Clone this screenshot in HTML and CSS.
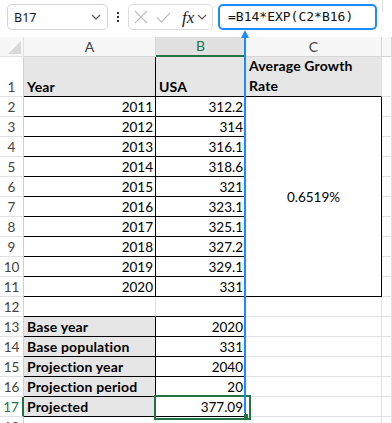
FILE: index.html
```html
<!DOCTYPE html>
<html lang="en">
<head>
    <meta charset="UTF-8">
    <meta name="viewport" content="width=device-width, initial-scale=1.0">
    <title>Population Projection - Book1</title>
    <link rel="stylesheet" href="styles.css">
</head>
<body>
    <div class="app">
        <div class="toolbar">
            <div class="namebox">
                <span>B17</span>
                <svg class="chev" width="10" height="6" viewBox="0 0 10 6"><path d="M1 1l4 4 4-4"/></svg>
            </div>
            <div class="more"><i></i><i></i><i></i></div>
            <div class="fnbox">
                <svg class="cancel" width="14" height="14" viewBox="0 0 14 14"><path d="M1 1l12 12M13 1L1 13"/></svg>
                <svg class="enter" width="15" height="11" viewBox="0 0 15 11"><path d="M1 5.5l4.5 4.5L14 1"/></svg>
                <span class="fx">fx</span>
                <svg class="chev" width="10" height="6" viewBox="0 0 10 6"><path d="M1 1l4 4 4-4"/></svg>
            </div>
            <div class="formula">=B14*EXP(C2*B16)</div>
            <div class="tail"></div>
        </div>

        <div class="sheet">
            <div class="corner"><span></span></div>
            <div class="col">A</div>
            <div class="col active">B</div>
            <div class="col">C</div>
            <div class="col"></div>

            <div class="rh">1</div>
            <div class="c fill b bk">Year</div>
            <div class="c fill b bk">USA</div>
            <div class="c fill b bb wrap">Average Growth Rate</div>
            <div class="c"></div>

            <div class="rh">2</div>
            <div class="c num bk">2011</div>
            <div class="c num bk">312.2</div>
            <div class="c merged bk">0.6519%</div>
            <div class="c"></div>

            <div class="rh">3</div>
            <div class="c num bk">2012</div>
            <div class="c num bk">314</div>
            <div class="c"></div>

            <div class="rh">4</div>
            <div class="c num bk">2013</div>
            <div class="c num bk">316.1</div>
            <div class="c"></div>

            <div class="rh">5</div>
            <div class="c num bk">2014</div>
            <div class="c num bk">318.6</div>
            <div class="c"></div>

            <div class="rh">6</div>
            <div class="c num bk">2015</div>
            <div class="c num bk">321</div>
            <div class="c"></div>

            <div class="rh">7</div>
            <div class="c num bk">2016</div>
            <div class="c num bk">323.1</div>
            <div class="c"></div>

            <div class="rh">8</div>
            <div class="c num bk">2017</div>
            <div class="c num bk">325.1</div>
            <div class="c"></div>

            <div class="rh">9</div>
            <div class="c num bk">2018</div>
            <div class="c num bk">327.2</div>
            <div class="c"></div>

            <div class="rh">10</div>
            <div class="c num bk">2019</div>
            <div class="c num bk">329.1</div>
            <div class="c"></div>

            <div class="rh">11</div>
            <div class="c num bk">2020</div>
            <div class="c num bk">331</div>
            <div class="c"></div>

            <div class="rh">12</div>
            <div class="c bb"></div>
            <div class="c bb"></div>
            <div class="c"></div>
            <div class="c"></div>

            <div class="rh">13</div>
            <div class="c fill b bk">Base year</div>
            <div class="c num bk">2020</div>
            <div class="c"></div>
            <div class="c"></div>

            <div class="rh">14</div>
            <div class="c fill b bk">Base population</div>
            <div class="c num bk">331</div>
            <div class="c"></div>
            <div class="c"></div>

            <div class="rh">15</div>
            <div class="c fill b bk">Projection year</div>
            <div class="c num bk">2040</div>
            <div class="c"></div>
            <div class="c"></div>

            <div class="rh">16</div>
            <div class="c fill b bk">Projection period</div>
            <div class="c num bk">20</div>
            <div class="c"></div>
            <div class="c"></div>

            <div class="rh sel">17</div>
            <div class="c fill b bk">Projected</div>
            <div class="c num bk current">377.09<span class="handle"></span></div>
            <div class="c"></div>
            <div class="c"></div>

            <div class="rh">18</div>
            <div class="c"></div>
            <div class="c"></div>
            <div class="c"></div>
            <div class="c"></div>
        </div>

        <!-- precedent arrow from B17 up to the formula bar -->
        <svg class="trace" width="10" height="386" viewBox="0 0 10 386">
            <path d="M5 8V384"/>
            <polygon points="5,1 1,9 9,9"/>
        </svg>
    </div>
</body>
</html>
```

FILE: styles.css
```css
* { box-sizing: border-box; }
body { margin: 0; background: #fff; font-family: Lato, "Noto Sans", sans-serif; }
.app { position: relative; width: 392px; height: 423px; overflow: hidden; }

.toolbar { height: 37px; display: flex; align-items: flex-start; padding: 4px 0 0 7px; }
.namebox { width: 101px; height: 26px; border: 1px solid #d4d4d4; border-radius: 5px; display: flex; align-items: center; justify-content: space-between; padding: 0 6px 0 6px; font-family: "Noto Sans", sans-serif; font-size: 12.5px; color: #1b1b1b; }
.chev path { fill: none; stroke: #555; stroke-width: 1.1; }
.more { width: 20px; height: 26px; display: flex; flex-direction: column; align-items: center; justify-content: center; gap: 2px; }
.more i { display: block; width: 2px; height: 2px; background: #333; }
.fnbox { width: 85px; height: 26px; border: 1px solid #dcdcdc; border-radius: 5px; display: flex; align-items: center; padding-left: 5px; }
.fnbox .cancel { margin-right: 8px; }
.fnbox .enter { margin-right: 11px; }
.cancel path, .enter path { fill: none; stroke: #bdbdbd; stroke-width: 1.1; }
.fx { font-family: "Liberation Serif", serif; font-style: italic; font-size: 17px; color: #222; margin-right: 3px; line-height: 1; }
.formula { margin-left: 5px; width: 159px; height: 26px; border: 2px solid #1a8cff; border-radius: 5px; padding-left: 8px; font-family: "DejaVu Sans Mono", monospace; font-size: 13px; line-height: 22px; color: #111; }
.tail { width: 1px; height: 12px; margin: -4px 0 0 5px; background: #dedede; }

.sheet { display: grid; grid-template-columns: 24px 132px 90px 136px 10px; grid-template-rows: 20px 40px repeat(17, 20px); }
.sheet > div { border-right: 1px solid #e1e1e1; border-bottom: 1px solid #e1e1e1; }

.corner { display: flex; align-items: flex-end; justify-content: flex-end; background: #f7f7f7; }
.corner span { width: 13px; height: 13px; margin: 0 2px 2px 0; background: #d9d9d9; clip-path: polygon(100% 0, 100% 100%, 0 100%); }
.sheet > .col { background: #f7f7f7; color: #444; text-align: center; font-size: 14px; line-height: 19px; border-right-color: #d6d6d6; border-bottom-color: #d6d6d6; }
.sheet > .col.active { background: #e1e1e1; color: #217346; border-bottom: 2px solid #217346; line-height: 18px; }

.sheet > .rh { display: flex; align-items: flex-end; justify-content: center; color: #444; font-size: 13.5px; line-height: 18px; border-right-color: #d0d0d0; }
.sheet > .rh.sel { color: #217346; border-right: 2px solid #217346; }

.c { display: flex; align-items: flex-end; padding: 0 3px; font-size: 13.5px; line-height: 18px; color: #000; white-space: nowrap; }
.num { justify-content: flex-end; padding-right: 2px; }
.b { font-weight: 700; font-size: 14px; letter-spacing: 0.15px; }
.fill { background: #e7e6e6; }
.sheet > .bk { border-right-color: #000; border-bottom-color: #000; }
.sheet > .bb { border-bottom-color: #000; }
.wrap { white-space: normal; line-height: 20px; }
.merged { grid-row: span 10; align-items: center; justify-content: center; }

.current { position: relative; }
.current::after { content: ""; position: absolute; left: -2px; top: -2px; width: 93px; height: 21px; border: 2px solid #217346; }
.handle { position: absolute; left: 88px; top: 17px; width: 4px; height: 4px; background: #217346; z-index: 1; }

.trace { position: absolute; left: 240px; top: 29px; }
.trace path { stroke: #1a8cff; stroke-width: 2; fill: none; }
.trace polygon { fill: #1a8cff; }
```
